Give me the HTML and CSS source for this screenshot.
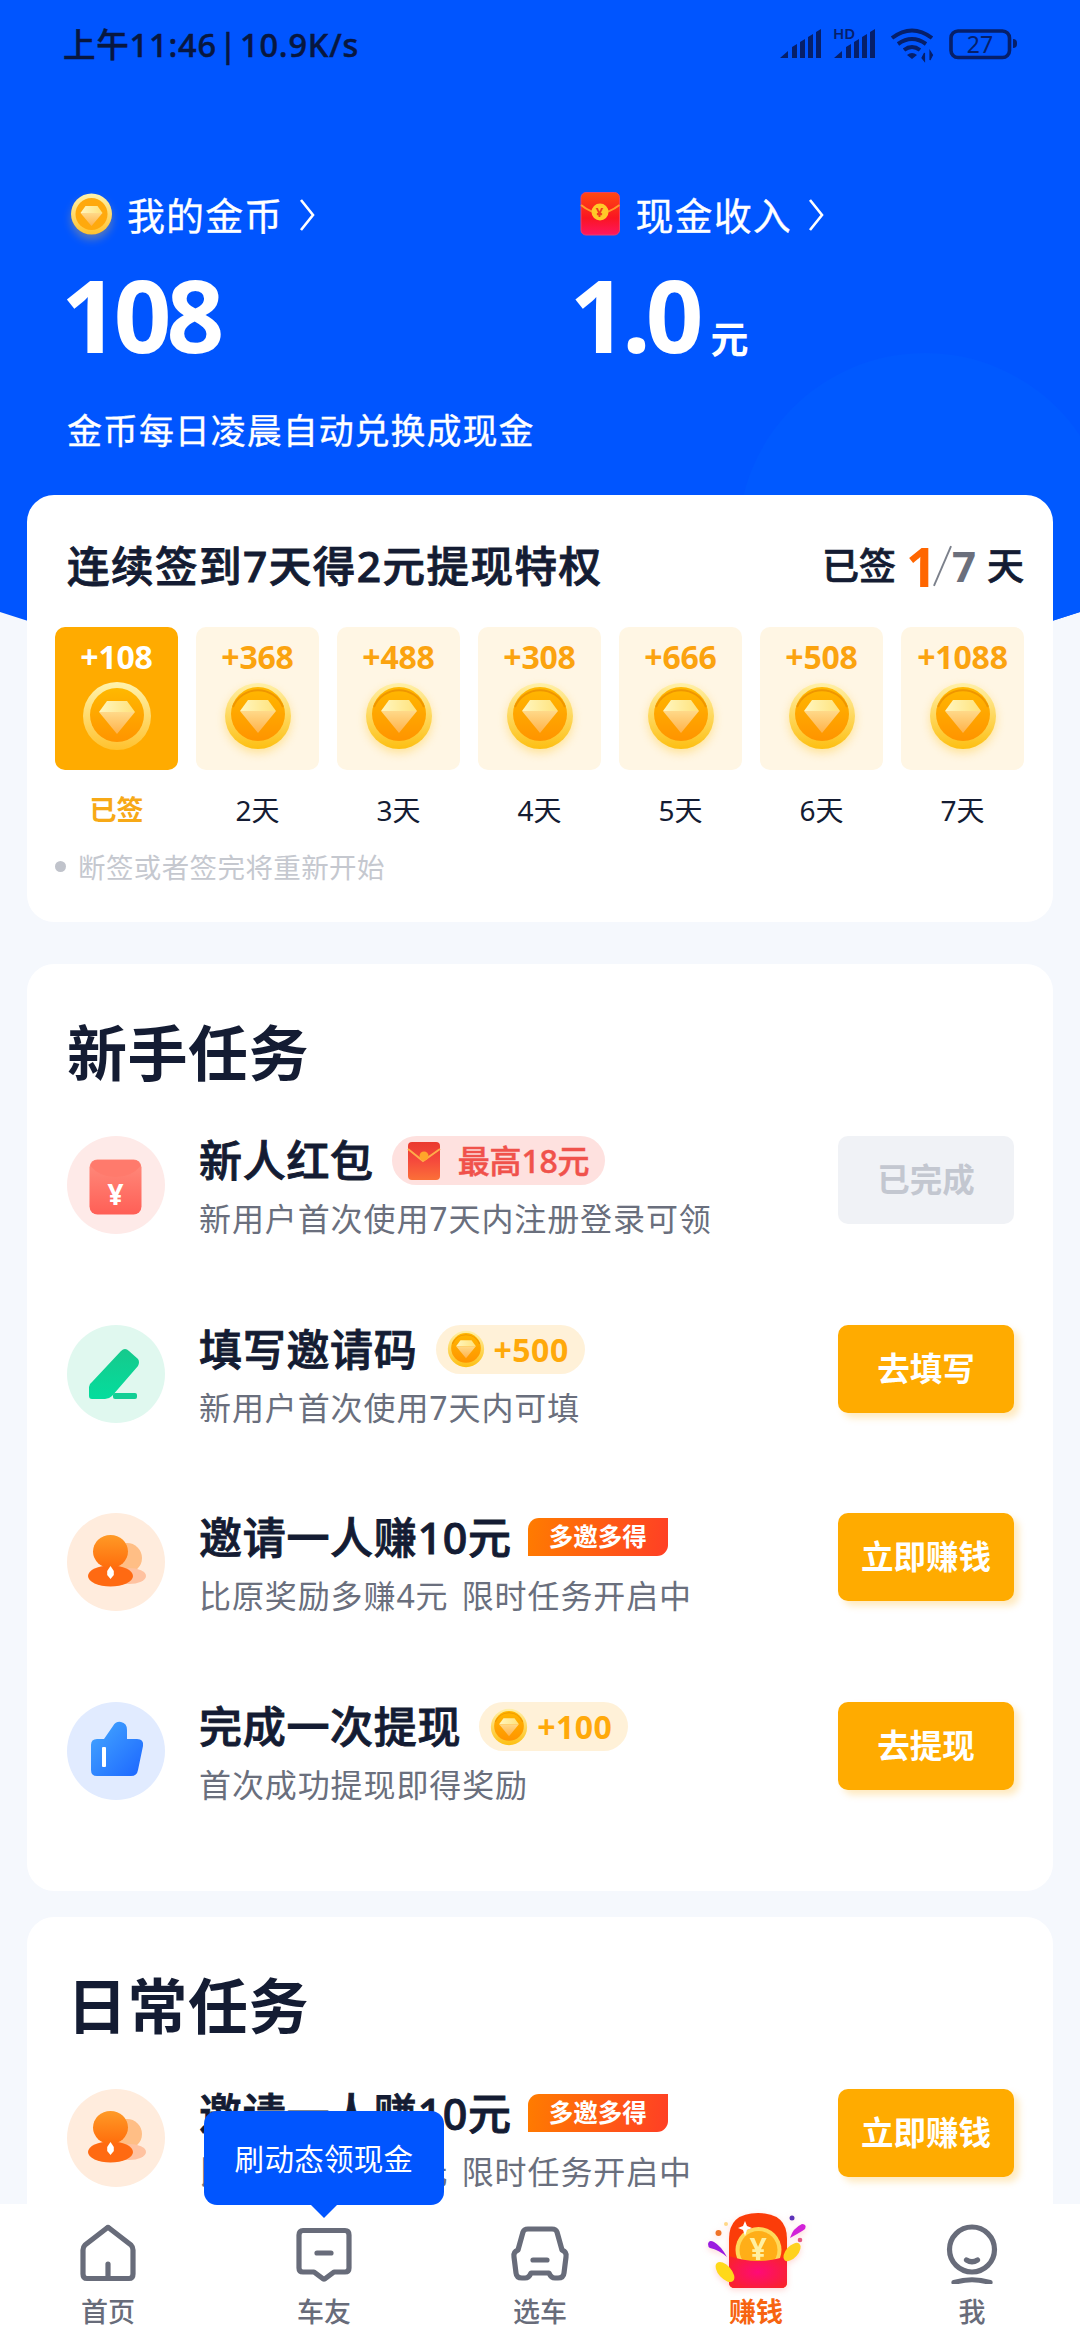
FILE: index.html
```html
<!DOCTYPE html>
<html lang="zh-CN">
<head>
<meta charset="utf-8">
<title>赚钱</title>
<link rel="stylesheet" href="styles.css">
</head>
<body>
<svg class="defs" width="0" height="0" aria-hidden="true">
  <defs>
    <linearGradient id="rim" x1="0" y1="0" x2="0" y2="1"><stop offset="0" stop-color="#fff0a8"/><stop offset="1" stop-color="#fdbf12"/></linearGradient>
    <linearGradient id="rimPale" x1="0" y1="0" x2="0" y2="1"><stop offset="0" stop-color="#fff3ae"/><stop offset="1" stop-color="#ffc22e"/></linearGradient>
    <linearGradient id="face" x1="0" y1="0" x2="0" y2="1"><stop offset="0" stop-color="#ffb800"/><stop offset="1" stop-color="#ff9400"/></linearGradient>
    <linearGradient id="gemTop" x1="0" y1="0" x2="1" y2="0"><stop offset="0" stop-color="#fff6c0"/><stop offset="1" stop-color="#ffe27a"/></linearGradient>
    <linearGradient id="gemLow" x1="0" y1="0" x2="0" y2="1"><stop offset="0" stop-color="#ffd989"/><stop offset="1" stop-color="#ffb24a"/></linearGradient>
    <linearGradient id="redBag" x1="0" y1="0" x2="0" y2="1"><stop offset="0" stop-color="#ff4a10"/><stop offset=".6" stop-color="#fa1522"/><stop offset="1" stop-color="#ff1660"/></linearGradient>
    <linearGradient id="miniBag" x1="0" y1="0" x2="0" y2="1"><stop offset="0" stop-color="#ea3a2e"/><stop offset=".5" stop-color="#f54a3c"/><stop offset="1" stop-color="#fb7038"/></linearGradient>
    <linearGradient id="softRed" x1="0" y1="0" x2="0" y2="1"><stop offset="0" stop-color="#ff8c7d"/><stop offset="1" stop-color="#ff5f56"/></linearGradient>
    <linearGradient id="green" x1="0" y1="0" x2="0" y2="1"><stop offset="0" stop-color="#16c98c"/><stop offset="1" stop-color="#04dd9d"/></linearGradient>
    <linearGradient id="orange" x1="0" y1="0" x2="0" y2="1"><stop offset="0" stop-color="#ff9a26"/><stop offset="1" stop-color="#ff6d0c"/></linearGradient>
    <linearGradient id="blue" x1="0" y1="0" x2="1" y2="1"><stop offset="0" stop-color="#45a8ff"/><stop offset="1" stop-color="#1c66ff"/></linearGradient>
    <radialGradient id="pocket" cx=".5" cy=".5" r=".6"><stop offset="0" stop-color="#ff0a78"/><stop offset="1" stop-color="#f9222e"/></radialGradient>
    <clipPath id="headerShape"><path d="M0 0H1080V612Q540 790 0 612Z"/></clipPath>
    <symbol id="coin" viewBox="0 0 80 80">
      <circle cx="40" cy="40" r="33" fill="url(#rim)"/>
      <circle cx="40" cy="38" r="27" fill="url(#face)"/>
      <path d="M15 31a27 27 0 0 1 50 0" fill="none" stroke="#ef9600" stroke-width="2"/>
      <path d="M30 24H50L58 35H22Z" fill="url(#gemTop)"/>
      <path d="M22 35H58L40 57Z" fill="url(#gemLow)"/>
    </symbol>
    <symbol id="coinPale" viewBox="0 0 80 80">
      <circle cx="40" cy="40" r="34" fill="url(#rimPale)"/>
      <circle cx="40" cy="39" r="27" fill="url(#face)"/>
      <path d="M30 25H50L58 36H22Z" fill="url(#gemTop)"/>
      <path d="M22 36H58L40 58Z" fill="url(#gemLow)"/>
    </symbol>
    <symbol id="people" viewBox="0 0 98 98">
      <circle cx="60" cy="45" r="15" fill="#ffbe85"/>
      <ellipse cx="62" cy="63" rx="17" ry="8" fill="#ffc2a0"/>
      <ellipse cx="43.5" cy="63" rx="22.5" ry="10.5" fill="#ff6a12"/>
      <ellipse cx="43.5" cy="38.5" rx="17.5" ry="16.5" fill="url(#orange)"/>
      <path d="M43.5 53l3.3 5v4l-3.3 4-3.3-4v-4Z" fill="#fff"/>
    </symbol>
  </defs>
</svg>

<main class="page">
  <svg class="backdrop" viewBox="0 0 1080 700" aria-hidden="true">
    <g clip-path="url(#headerShape)">
      <rect width="1080" height="700" fill="#0055ff"/>
      <circle cx="925" cy="540" r="187" fill="#0059ff"/>
    </g>
  </svg>

  <div class="status">
    <span class="status-text">上午11:46 | 10.9K/s</span>
    <svg class="status-icons" viewBox="0 0 290 70">
      <g fill="#061f6a">
        <path d="M20 48l8-7v7ZM32 48V37l5-3v14ZM40 48V32l5-3v19ZM48 48V27l5-3v24ZM56 48V22l5-3v29Z"/>
        <path d="M74 48l8-7v7ZM86 48V37l5-3v14ZM94 48V32l5-3v19ZM102 48V27l5-3v24ZM110 48V22l5-3v29Z"/>
        <path d="M152 49l-5-4q5-4 10 0Z"/>
        <path d="M164.500 51V43l-2.500 5zM170 41v9l2.500-5z" stroke="#061f6a" stroke-width="1.200"/>
      </g>
      <text x="73" y="29" class="hd">HD</text>
      <path d="M132 28q20-15 40 0M138 34q14-10 28 0M144 40q8-6 16 0" fill="none" stroke="#061f6a" stroke-width="4"/>
      <rect x="191" y="21" width="58.500" height="26.500" rx="7" fill="none" stroke="#061f6a" stroke-width="3.600"/>
      <path d="M253 29q4 0 4 4v1q0 4-4 4Z" fill="#061f6a"/>
      <text x="220" y="43" class="battery">27</text>
    </svg>
  </div>

  <section class="wallet">
    <div class="balance">
      <div class="balance-name">
        <svg class="wallet-icon coin-glow" viewBox="0 0 56 56"><circle cx="24.500" cy="27" r="20.500" fill="url(#rimPale)"/><circle cx="24.500" cy="27" r="16" fill="#ffa90d"/><path d="M18.500 19h12l5 7h-22Z" fill="url(#gemTop)"/><path d="M13.500 26h22L24.500 39Z" fill="url(#gemLow)"/></svg>
        <span>我的金币</span>
        <svg class="chevron" viewBox="0 0 20 36"><path d="M4 3L16 18 4 33"/></svg>
      </div>
      <div class="amount">108</div>
    </div>
    <div class="balance">
      <div class="balance-name cash">
        <svg class="wallet-icon" viewBox="0 0 56 56"><rect x="6" y="5.500" width="38.500" height="42.500" rx="5" fill="url(#redBag)" stroke="#e8406a" stroke-width="1"/><path d="M6 18q10 8 19 8t19.500-8" fill="none" stroke="#ff9a2c" stroke-width="2"/><circle cx="25" cy="25" r="8.500" fill="#ffc928"/><text x="25" y="30" class="yen-mini">¥</text></svg>
        <span>现金收入</span>
        <svg class="chevron" viewBox="0 0 20 36"><path d="M4 3L16 18 4 33"/></svg>
      </div>
      <div class="amount cash-amount">1.0<small>元</small></div>
    </div>
  </section>
  <p class="wallet-note">金币每日凌晨自动兑换成现金</p>

  <section class="card checkin">
    <header class="checkin-head">
      <h2>连续签到7天得2元提现特权</h2>
      <div class="progress"><span>已签</span><b class="now">1</b><svg viewBox="0 0 20 42"><path d="M1 42L19 0"/></svg><b class="total">7</b><span>天</span></div>
    </header>
    <ol class="days">
      <li class="done"><div class="tile"><b>+108</b><svg><use href="#coinPale"/></svg></div><span>已签</span></li>
      <li><div class="tile"><b>+368</b><svg><use href="#coin"/></svg></div><span>2天</span></li>
      <li><div class="tile"><b>+488</b><svg><use href="#coin"/></svg></div><span>3天</span></li>
      <li><div class="tile"><b>+308</b><svg><use href="#coin"/></svg></div><span>4天</span></li>
      <li><div class="tile"><b>+666</b><svg><use href="#coin"/></svg></div><span>5天</span></li>
      <li><div class="tile"><b>+508</b><svg><use href="#coin"/></svg></div><span>6天</span></li>
      <li><div class="tile"><b>+1088</b><svg><use href="#coin"/></svg></div><span>7天</span></li>
    </ol>
    <p class="rule">断签或者签完将重新开始</p>
  </section>

  <section class="card tasks newbie">
    <h1>新手任务</h1>
    <ul>
      <li class="task">
        <svg class="task-icon red" viewBox="0 0 98 98"><rect x="22.500" y="23.500" width="52" height="55" rx="8" fill="url(#softRed)"/><path d="M23.500 30q1-6 7-6h36q6 0 7 6-9 11-25 11t-25-11Z" fill="#ff7a6c"/><text x="48.500" y="69" class="yen-white">¥</text></svg>
        <div class="task-body">
          <div class="task-name"><span>新人红包</span><span class="pill hot"><svg viewBox="0 0 34 40"><rect x="1" y="1" width="32" height="38" rx="4" fill="url(#miniBag)"/><path d="M1 8l15 12L33 8" fill="none" stroke="#ffac4a" stroke-width="2"/><circle cx="17" cy="15" r="4.500" fill="#ffa52a"/></svg>最高18元</span></div>
          <p>新用户首次使用7天内注册登录可领</p>
        </div>
        <button class="btn off">已完成</button>
      </li>
      <li class="task">
        <svg class="task-icon green" viewBox="0 0 98 98"><path d="M54 26Q58 22 62 26L71 34Q73 37 71 41L45 71Q42 74 38 74H25Q22 74 22 71V62Q22 59 25 57Z" fill="url(#green)"/><rect x="46" y="68" width="24" height="6" rx="2" fill="#12cf95"/></svg>
        <div class="task-body">
          <div class="task-name"><span>填写邀请码</span><span class="pill gold"><svg viewBox="0 0 80 80"><use href="#coin"/></svg>+500</span></div>
          <p>新用户首次使用7天内可填</p>
        </div>
        <button class="btn">去填写</button>
      </li>
      <li class="task">
        <svg class="task-icon orange"><use href="#people"/></svg>
        <div class="task-body">
          <div class="task-name"><span>邀请一人赚10元</span><span class="tag">多邀多得</span></div>
          <p>比原奖励多赚4元 限时任务开启中</p>
        </div>
        <button class="btn">立即赚钱</button>
      </li>
      <li class="task">
        <svg class="task-icon blue" viewBox="0 0 98 98"><path d="M30 37H37L46 24Q49 19 54 20 60 21 60 28V37H70Q77 37 76 44L71 68Q70 74 64 74H30Q24 74 24 68V43Q24 37 30 37Z" fill="url(#blue)"/><rect x="35" y="45" width="4" height="20" rx="1" fill="#fff"/></svg>
        <div class="task-body">
          <div class="task-name"><span>完成一次提现</span><span class="pill gold"><svg viewBox="0 0 80 80"><use href="#coin"/></svg>+100</span></div>
          <p>首次成功提现即得奖励</p>
        </div>
        <button class="btn">去提现</button>
      </li>
    </ul>
  </section>

  <section class="card tasks">
    <h1>日常任务</h1>
    <ul>
      <li class="task">
        <svg class="task-icon orange"><use href="#people"/></svg>
        <div class="task-body">
          <div class="task-name"><span>邀请一人赚10元</span><span class="tag">多邀多得</span></div>
          <p>比原奖励多赚4元 限时任务开启中</p>
        </div>
        <button class="btn">立即赚钱</button>
      </li>
    </ul>
  </section>
</main>

<nav class="tabs">
  <a class="tab"><svg viewBox="0 0 64 64"><path d="M31 8Q32 7 33 8L55 25Q57 27 57 30V54Q57 58.500 53 58.500H11Q7 58.500 7 54V30Q7 27 9 25ZM32 44V58"/></svg><span>首页</span></a>
  <a class="tab"><div class="bubble">刷动态领现金</div><svg viewBox="0 0 64 64"><path d="M11 10.500H53Q57 10.500 57 15V48Q57 52 53 52H42L34 58Q32 60 30 58L22 52H11Q7 52 7 48V15Q7 10.500 11 10.500ZM25 33H39"/></svg><span>车友</span></a>
  <a class="tab"><svg viewBox="0 0 64 64"><path d="M20 9H44Q48 9 49 12L54 30Q59 32 58 37L56 53Q55.500 58 50 58H47Q43 58 41 53H23Q21 58 17 58H14Q8.500 58 8 53L6 37Q5 32 10 30L15 12Q16 9 20 9ZM25 40H39"/></svg><span>选车</span></a>
  <a class="tab active"><svg class="earn" viewBox="0 0 130 100">
    <path d="M38 49Q38 23 67 23 96 23 96 49V92Q96 98 90 98H44Q38 98 38 92Z" fill="#fb3c09"/>
    <circle cx="67.500" cy="60" r="23" fill="#ffd95a"/><circle cx="67.500" cy="60" r="19" fill="#ffae18"/>
    <text x="67" y="70" class="yen-coin">¥</text>
    <path d="M38 66Q67 76 96 66V92Q96 98 90 98H44Q38 98 38 92Z" fill="url(#pocket)"/>
    <path d="M54 31l2 5 5 2-5 2-2 6-2-6-5-2 5-2Z" fill="#fff"/>
    <ellipse cx="34" cy="82" rx="6.500" ry="12" transform="rotate(-42 34 82)" fill="#ffd91a"/>
    <ellipse cx="101" cy="62" rx="6" ry="11" transform="rotate(42 101 62)" fill="#ffd21f"/>
    <path d="M17 54Q18 49 23 52 30 56 36 67 28 60 19 58 17 57 17 54Z" fill="#9a1ce0"/>
    <path d="M99 48Q102 38 111 34 116 34 114 39 110 42 99 48Z" fill="#d222d8"/>
    <circle cx="27.500" cy="43" r="3" fill="#ef7328"/><circle cx="101" cy="28" r="2.500" fill="#5c32b8"/><circle cx="109" cy="50" r="2.300" fill="#e45a84"/><circle cx="35" cy="34" r="2" fill="#ffd887"/>
  </svg><span>赚钱</span></a>
  <a class="tab"><svg viewBox="0 0 64 64"><circle cx="32" cy="29.500" r="22.500"/><path d="M26.500 40Q32 43.500 37.500 40M14 62.500Q32 57 50 62.500"/></svg><span>我</span></a>
</nav>
</body>
</html>
```
FILE: styles.css
```css
* { box-sizing: border-box; margin: 0; padding: 0; }

body {
  width: 1080px;
  height: 2340px;
  overflow: hidden;
  display: flex;
  flex-direction: column;
  background: #f5f8fd;
  color: #141c33;
  font-family: "Noto Sans", "Noto Sans CJK SC", sans-serif;
  white-space: nowrap;
}

ul, ol { list-style: none; }
.defs { position: absolute; }

.page {
  position: relative;
  height: 2204px;
  overflow: hidden;
  flex: none;
}

.backdrop {
  position: absolute;
  left: 0;
  top: 0;
  width: 1080px;
  height: 700px;
  z-index: -1;
}

/* status bar */
.status {
  display: flex;
  justify-content: space-between;
  padding: 10px 30px 0 63px;
  height: 180px;
}

.status-text {
  font-size: 32.5px;
  line-height: 70px;
  font-weight: 500;
  color: #08173f;
  letter-spacing: .8px;
  word-spacing: -7px;
  -webkit-text-stroke: .5px #08173f;
}

.status-icons { width: 290px; height: 70px; }
.hd { font-size: 15px; font-weight: 600; fill: #061f6a; }
.battery { font-size: 23px; fill: #061f6a; text-anchor: middle; }

/* balances */
.wallet { display: flex; height: 210px; padding-left: 67px; }
.balance { width: 510px; color: #fff; }

.balance-name {
  display: flex;
  align-items: center;
  height: 70px;
  font-size: 38px;
  letter-spacing: 1.1px;
  -webkit-text-stroke: .3px #fff;
}

.balance-name.cash .wallet-icon { margin-right: 5px; }
.wallet-icon { width: 56px; height: 56px; margin: 0 4px 0 0; }
.balance-name span { line-height: 60px; }
.coin-glow { filter: drop-shadow(0 5px 4px rgba(255, 190, 60, .35)); }
.chevron { width: 20px; height: 36px; margin-left: 14px; fill: none; stroke: #fff; stroke-width: 2.6; }
.yen-mini { font-size: 13px; font-weight: 700; fill: #f03c1e; text-anchor: middle; }

.amount {
  margin-left: -6px;
  font-size: 101px;
  font-weight: 700;
  line-height: 128px;
  letter-spacing: -5px;
}

.cash-amount { margin-left: -4px; }
.amount small { font-size: 38px; font-weight: 700; margin-left: 12px; letter-spacing: 0; }
.balance-name.cash { padding-left: 1px; }

.wallet-note {
  height: 105px;
  padding: 13px 0 0 67px;
  color: #fff;
  font-size: 35px;
  line-height: 56px;
  letter-spacing: .95px;
  -webkit-text-stroke: .3px #fff;
}

/* cards */
.card {
  width: 1026px;
  margin: 0 auto;
  background: #fff;
  border-radius: 27px;
}

.checkin { height: 427px; margin-bottom: 42px; padding: 41px 29px 0 28px; }

.checkin-head {
  display: flex;
  justify-content: space-between;
  align-items: center;
  height: 60px;
  margin-bottom: 31px;
  padding-left: 12px;
}

.checkin-head h2 { font-size: 42.5px; font-weight: 500; line-height: 60px; letter-spacing: 1.5px; -webkit-text-stroke: .9px #141c33; }
.progress { display: flex; align-items: center; font-size: 37px; font-weight: 500; line-height: 60px; }
.progress span { -webkit-text-stroke: .7px #141c33; }
.progress .now { font-size: 54px; color: #ff6600; margin: 0 0 0 10px; width: 27px; line-height: 56px; }
.progress svg { width: 19px; height: 42px; fill: none; stroke: #7b808b; stroke-width: 2; }
.progress .total { font-size: 42px; color: #6b6f7c; margin-right: 11px; font-weight: 700; }

.days { display: grid; grid-template-columns: repeat(7, 1fr); gap: 18px; height: 215px; }
.days li { text-align: center; }

.tile {
  height: 143px;
  padding-top: 10px;
  border-radius: 10px;
  background: #fff6e4;
  color: #fba30f;
}

.tile b { display: block; font-size: 32px; line-height: 40px; letter-spacing: -.2px; }
.tile svg { display: block; width: 80px; height: 80px; margin: -1px auto 0; filter: drop-shadow(0 4px 5px rgba(255, 205, 60, .45)); }
.days span { display: block; padding-top: 20px; font-size: 28px; line-height: 40px; }
.done .tile { background: #ffab00; color: #fff; }
.done .tile svg { filter: none; }
.done span { color: #f7a916; font-size: 27px; font-weight: 700; }

.rule { display: flex; align-items: center; gap: 12px; height: 48px; color: #c5c8cf; font-size: 27.5px; letter-spacing: .4px; }
.rule::before { content: ""; width: 11px; height: 11px; border-radius: 50%; background: #c0c3cb; }

/* tasks */
.tasks { padding: 49px 39px 0 40px; }
.newbie { height: 927px; margin-bottom: 26px; }
.tasks:last-child { height: 340px; }
.tasks h1 { font-size: 60px; font-weight: 700; line-height: 80px; margin-bottom: 43px; letter-spacing: .5px; }
.tasks ul { display: grid; row-gap: 90px; }

.task { display: flex; height: 98.7px; }
.task-icon { width: 98px; height: 98px; border-radius: 50%; margin-right: 34px; flex: none; }
.task-icon.red { background: #feeae8; }
.task-icon.green { background: #e0f8ef; }
.task-icon.orange { background: #ffecdd; }
.task-icon.blue { background: #e1ebff; }
.yen-white { font-size: 28px; font-weight: 700; fill: #fff; text-anchor: middle; }

.task-body { flex: 1; }
.task-name { display: flex; align-items: center; height: 49px; font-size: 43px; font-weight: 500; letter-spacing: .7px; line-height: 49px; }
.task-name > span:first-child { -webkit-text-stroke: .9px #141c33; }
.task-body p { font-size: 32px; line-height: 48px; margin-top: 10px; color: #6a6f7d; letter-spacing: .9px; word-spacing: 4px; }

.pill {
  display: flex;
  align-items: center;
  height: 49px;
  margin: 0 0 0 18px;
  border-radius: 25px;
  font-size: 32px;
  line-height: 49px;
  letter-spacing: 0;
}

.pill.hot { padding: 0 16px 0 15px; background: #fee1df; color: #f0524b; letter-spacing: -.2px; -webkit-text-stroke: .5px #f0524b; }
.hot svg { width: 34px; height: 40px; margin-right: 17px; }
.pill.gold { padding: 0 16px 0 8px; background: #fff1d8; color: #ffa90a; font-weight: 700; letter-spacing: .5px; }
.gold svg { width: 44px; height: 44px; margin-right: 6px; }

.tag {
  height: 38px;
  margin: -1px 0 0 16px;
  padding: 0 21px;
  border-radius: 11px 0 11px 0;
  background: linear-gradient(100deg, #ff7c00, #ff3f25);
  color: #fff;
  font-size: 24.5px;
  font-weight: 700;
  line-height: 38px;
  letter-spacing: 0;
}

.btn {
  width: 176px;
  height: 88px;
  border: 0;
  border-radius: 10px;
  background: #ffab00;
  box-shadow: 5px 5px 7px rgba(255, 171, 0, .25);
  color: #fff;
  font: 700 32.5px/88px "Noto Sans", "Noto Sans CJK SC", sans-serif;
}

.btn.off { background: #f0f2f6; color: #c3c7d0; box-shadow: none; }

/* bottom navigation */
.tabs { position: relative; display: flex; height: 136px; background: #fff; flex: none; }

.tab {
  position: relative;
  display: flex;
  flex: 1;
  flex-direction: column;
  align-items: center;
  justify-content: flex-end;
  padding-bottom: 9px;
  color: #686c7a;
  font-size: 27px;
  font-weight: 500;
}

.tab span { line-height: 38px; }
.tab > svg { width: 64px; height: 64px; margin-bottom: 9px; fill: none; stroke: #686c7a; stroke-width: 5.2; stroke-linecap: round; stroke-linejoin: round; }
.tab .earn { width: 130px; height: 100px; margin-bottom: 3px; stroke: none; overflow: visible; filter: drop-shadow(0 2px 3px rgba(255, 120, 110, .3)); }
.tab.active { color: #f76410; font-weight: 700; }
.yen-coin { font-size: 30px; font-weight: 700; fill: #fff0a2; text-anchor: middle; }

.bubble {
  position: absolute;
  left: -12px;
  bottom: 135px;
  width: 240px;
  height: 94px;
  border-radius: 13px;
  background: #0055ff;
  color: #fff;
  font-size: 29.5px;
  font-weight: 400;
  line-height: 95px;
  letter-spacing: .3px;
  text-align: center;
}

.bubble::after {
  content: "";
  position: absolute;
  left: 106px;
  top: 93px;
  border: 14px solid transparent;
  border-top-color: #0055ff;
  border-bottom: 0;
}
```
